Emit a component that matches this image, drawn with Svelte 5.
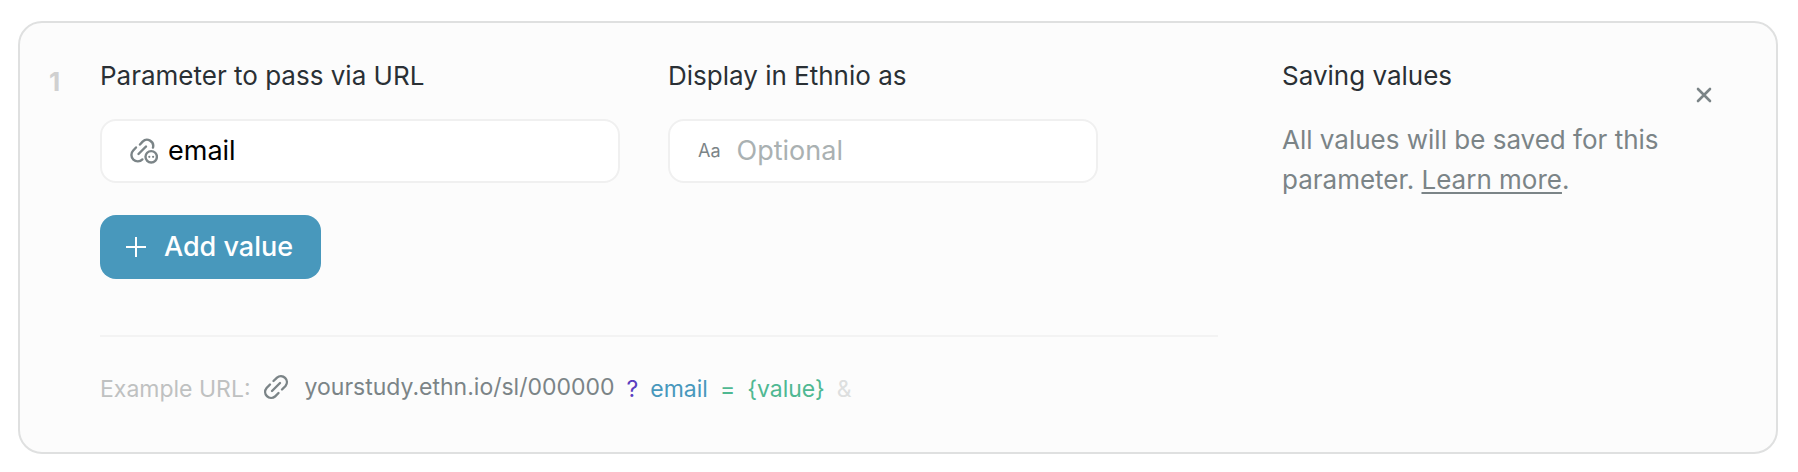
<script>
	let { index = 1 } = $props();

	let name = $state('email');
	let displayName = $state('');
	let values = $state([]);
	let open = $state(true);

	const baseUrl = 'yourstudy.ethn.io/sl/000000';

	function addValue() {
		values.push('');
	}
</script>

{#if open}
	<section class="card">
		<span class="index">{index}</span>

		<div class="main">
			<div class="fields">
				<div class="field">
					<label class="title" for="param-name">Parameter to pass via URL</label>
					<div class="box">
						<svg class="param-icon" viewBox="0 0 28 26" aria-hidden="true">
							<path d="M10 6.5 L12.6 3.6 A6.2 6.2 0 0 1 23 9.5" />
							<path d="M6 9.5 L3.2 12.5 A6.2 6.2 0 0 0 12.4 21.4" />
							<path d="M8.5 16 L16 8.5" />
							<circle cx="21.2" cy="18.8" r="5.7" />
							<circle class="dot" cx="19.3" cy="18.8" r="1.1" />
							<circle class="dot" cx="23.1" cy="18.8" r="1.1" />
						</svg>
						<input id="param-name" type="text" bind:value={name} />
					</div>
				</div>

				<div class="field">
					<label class="title" for="display-name">Display in Ethnio as</label>
					<div class="box wide-gap">
						<span class="aa" aria-hidden="true">Aa</span>
						<input id="display-name" type="text" placeholder="Optional" bind:value={displayName} />
					</div>
				</div>
			</div>

			<button class="add" type="button" onclick={addValue}>
				<svg viewBox="0 0 20 20" aria-hidden="true">
					<path d="M10 0 V20 M0 10 H20" />
				</svg>
				Add value
			</button>

			<div class="example">
				<span class="hint">Example URL:</span>
				<span class="url">
					<svg viewBox="0 0 26 26" aria-hidden="true">
						<path d="M10.5 7 L14 3.6 A6 6 0 0 1 22.5 12 L19 15.5" />
						<path d="M7 10.5 L3.6 14 A6 6 0 0 0 12 22.5 L15.5 19" />
						<path d="M9 17 L17 9" />
					</svg>
					{baseUrl}
				</span>
				<span class="mark">?</span>
				<span class="name">{name}</span>
				<span class="equals">=</span>
				<span class="value">{'{value}'}</span>
				<span class="amp">&amp;</span>
			</div>
		</div>

		<div class="saving">
			<h2 class="title">Saving values</h2>
			<p>All values will be saved for this parameter. <a href="#learn-more">Learn more</a>.</p>
		</div>

		<button class="close" type="button" aria-label="Remove parameter" onclick={() => (open = false)}>
			<svg viewBox="0 0 16 16" aria-hidden="true">
				<path d="M2 2 L14 14 M14 2 L2 14" />
			</svg>
		</button>
	</section>
{/if}

<style>
	:global(body) {
		background: #fff;
	}

	.card {
		display: grid;
		grid-template-columns: 51px minmax(0, 1118fr) minmax(0, 474fr) 24px;
		align-items: start;
		margin: 21px 20px 18px 18px;
		padding: 33px 60px 43px 29px;
		border: 2px solid #dfe0e0;
		border-radius: 24px;
		background: #fcfcfc;
		color: #2a3035;
		font-family: Inter, "Liberation Sans", sans-serif;
		font-size: 26px;
		line-height: 40px;
	}

	svg {
		flex: none;
		fill: none;
		stroke: #7b8487;
		stroke-width: 2;
		stroke-linecap: round;
	}

	input,
	button {
		font: inherit;
	}

	.index {
		padding-top: 6px;
		color: #d0d0d0;
		font-weight: 700;
	}

	.title {
		display: block;
		margin: 0;
		font-size: 26px;
		font-weight: 400;
	}

	.fields {
		display: grid;
		grid-template-columns: minmax(0, 520fr) minmax(0, 430fr);
		gap: 48px;
		padding-right: 120px;
	}

	.box {
		display: flex;
		align-items: center;
		gap: 10px;
		box-sizing: border-box;
		height: 64px;
		margin-top: 23px;
		padding: 0 28px;
		border: 2px solid #f0f0f0;
		border-radius: 16px;
		background: #fff;
		font-size: 27px;
	}

	.wide-gap {
		gap: 16px;
	}

	.box input {
		flex: 1;
		min-width: 0;
		padding: 0;
		border: 0;
		outline: 0;
		background: none;
		color: #000;
	}

	.box input::placeholder {
		color: #aab1b2;
		opacity: 1;
	}

	.param-icon {
		width: 28px;
		height: 26px;
		stroke-width: 2.4;
	}

	.param-icon .dot {
		fill: #7b8487;
		stroke: none;
	}

	.aa {
		color: #7b8487;
		font-size: 18px;
	}

	.add {
		display: flex;
		align-items: center;
		gap: 18px;
		height: 64px;
		margin-top: 32px;
		padding: 0 28px 0 26px;
		border: 0;
		border-radius: 16px;
		background: #4898bc;
		color: #fff;
		font-size: 27px;
		font-weight: 500;
		cursor: pointer;
	}

	.add svg {
		width: 20px;
		height: 20px;
		stroke: #fff;
		stroke-linecap: butt;
	}

	.example {
		display: flex;
		gap: 12px;
		margin-top: 56px;
		padding-top: 32px;
		border-top: 2px solid #f3f3f3;
		font-size: 23px;
	}

	.url {
		display: flex;
		align-items: center;
		gap: 16px;
		margin-bottom: 4px;
		color: #7b8487;
		line-height: 36px;
	}

	.url svg {
		width: 26px;
		height: 26px;
		stroke-width: 2.4;
	}

	.hint {
		color: #bfc1c1;
	}

	.mark {
		color: #5a3fc0;
	}

	.name {
		color: #4898bc;
	}

	.equals,
	.value {
		color: #4fb892;
	}

	.amp {
		color: #dddfdf;
	}

	.saving {
		padding-left: 64px;
	}

	.saving p {
		margin: 24px 0 0;
		color: #7b8487;
	}

	.saving a {
		color: inherit;
		text-decoration-thickness: 2px;
		text-underline-offset: 3px;
	}

	.close {
		display: flex;
		justify-content: center;
		margin-top: 27px;
		padding: 4px;
		border: 0;
		background: none;
		cursor: pointer;
	}

	.close svg {
		width: 16px;
		height: 16px;
		stroke-width: 2.6;
	}
</style>
